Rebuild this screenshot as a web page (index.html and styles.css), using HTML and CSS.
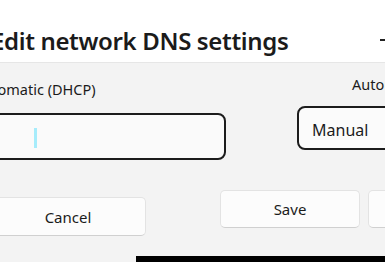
FILE: index.html
```html
<!DOCTYPE html>
<html lang="en">
<head>
<meta charset="utf-8">
<title>Edit network DNS settings</title>
<link rel="stylesheet" href="styles.css">
</head>
<body>
<header class="header">
  <h1 class="title">Edit network DNS settings</h1>
  <span class="minimize"></span>
</header>
<main class="content">
  <div class="labels">
    <span class="label label-left">Automatic (DHCP)</span>
    <span class="label label-right">Automatic</span>
  </div>
  <div class="fields">
    <div class="textbox"><span class="caret"></span></div>
    <div class="dropdown">Manual</div>
  </div>
  <div class="buttons">
    <button class="btn btn-cancel">Cancel</button>
    <button class="btn btn-save">Save</button>
    <button class="btn btn-extra"></button>
  </div>
  <div class="taskbar"></div>
</main>
</body>
</html>
```

FILE: styles.css
```css
html, body {
  margin: 0;
  padding: 0;
}
body {
  width: 385px;
  height: 262px;
  overflow: hidden;
  background: #f3f3f3;
  font-family: "Noto Sans", "Open Sans", sans-serif;
  color: #1b1b1b;
}
.header {
  height: 62px;
  background: #ffffff;
  border-bottom: 1px solid #e6e6e6;
  display: flex;
  justify-content: space-between;
  overflow: hidden;
}
.title {
  margin: 0 0 0 -9px;
  padding-top: 29px;
  font-size: 24px;
  line-height: 24px;
  font-weight: 600;
  white-space: nowrap;
  letter-spacing: -0.35px;
}
.minimize {
  flex-shrink: 0;
  width: 8px;
  height: 2px;
  background: #222;
  margin-top: 39px;
  margin-right: -3px;
}
.content {
  display: flex;
  flex-direction: column;
}
.labels {
  display: flex;
  align-items: flex-start;
  height: 36px;
}
.label {
  flex-shrink: 0;
  font-size: 14.5px;
  line-height: 20px;
  white-space: nowrap;
}
.label-left {
  flex: 0 0 378px;
  margin-left: -26px;
  margin-top: 16px;
}
.label-right {
  margin-top: 11px;
}
.fields {
  display: flex;
  align-items: flex-start;
  height: 61px;
}
.textbox {
  flex-shrink: 0;
  box-sizing: border-box;
  width: 236px;
  height: 47px;
  margin-left: -10px;
  margin-top: 14px;
  border: 2px solid #1c1c1c;
  border-radius: 8px;
  background: #fafafa;
  padding: 13px 0 0 42px;
}
.caret {
  display: block;
  width: 3px;
  height: 20px;
  background: #a6ecfb;
}
.dropdown {
  flex-shrink: 0;
  box-sizing: border-box;
  width: 120px;
  height: 44px;
  margin-left: 71px;
  margin-top: 7px;
  border: 2px solid #1c1c1c;
  border-radius: 8px;
  background: #fbfbfb;
  padding: 11px 0 0 13px;
  font-size: 16px;
  line-height: 22px;
}
.buttons {
  display: flex;
  align-items: flex-start;
  height: 96px;
}
.btn {
  flex-shrink: 0;
  box-sizing: border-box;
  border: 1px solid #e3e3e3;
  border-bottom-color: #d0d0d0;
  border-radius: 5px;
  background: #fcfcfc;
  font-family: "Noto Sans", "Open Sans", sans-serif;
  font-size: 15px;
  color: #1b1b1b;
  padding: 0;
}
.btn-cancel {
  width: 156px;
  height: 39px;
  margin-left: -10px;
  margin-top: 37px;
}
.btn-save {
  width: 140px;
  height: 38px;
  margin-left: 74px;
  margin-top: 30px;
}
.btn-extra {
  width: 60px;
  height: 38px;
  margin-left: 8px;
  margin-top: 30px;
}
.taskbar {
  margin-left: 136px;
  height: 6px;
  background: #000;
}
```
